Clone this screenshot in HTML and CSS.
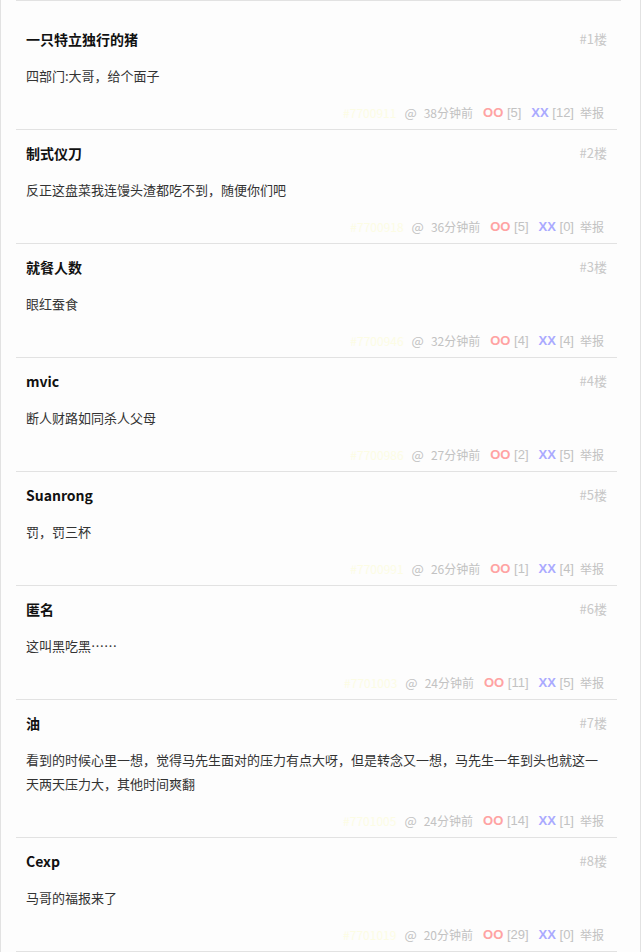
FILE: index.html
```html
<!DOCTYPE html>
<html lang="zh-CN">
  <head>
    <meta charset="UTF-8" />
    <title>吐槽</title>
    <link rel="stylesheet" href="styles.css">
  </head>
  <body>
    <div class="page">
      <div class="top-line"></div>
      <ol class="commentlist">
        <li class="comment">
          <div class="author"><b>一只特立独行的猪</b><span class="floor">#1楼</span></div>
          <div class="text">四部门:大哥，给个面子</div>
          <div class="meta">
            <span class="cid">#7700911</span>
            <span class="time"><i>@</i>38分钟前</span>
            <span class="vote"><b class="oo">OO</b> [5]</span>
            <span class="vote"><b class="xx">XX</b> [12]</span>
            <span class="report">举报</span>
          </div>
        </li>
        <li class="comment">
          <div class="author"><b>制式仪刀</b><span class="floor">#2楼</span></div>
          <div class="text">反正这盘菜我连馒头渣都吃不到，随便你们吧</div>
          <div class="meta">
            <span class="cid">#7700918</span>
            <span class="time"><i>@</i>36分钟前</span>
            <span class="vote"><b class="oo">OO</b> [5]</span>
            <span class="vote"><b class="xx">XX</b> [0]</span>
            <span class="report">举报</span>
          </div>
        </li>
        <li class="comment">
          <div class="author"><b>就餐人数</b><span class="floor">#3楼</span></div>
          <div class="text">眼红蚕食</div>
          <div class="meta">
            <span class="cid">#7700946</span>
            <span class="time"><i>@</i>32分钟前</span>
            <span class="vote"><b class="oo">OO</b> [4]</span>
            <span class="vote"><b class="xx">XX</b> [4]</span>
            <span class="report">举报</span>
          </div>
        </li>
        <li class="comment">
          <div class="author"><b>mvic</b><span class="floor">#4楼</span></div>
          <div class="text">断人财路如同杀人父母</div>
          <div class="meta">
            <span class="cid">#7700986</span>
            <span class="time"><i>@</i>27分钟前</span>
            <span class="vote"><b class="oo">OO</b> [2]</span>
            <span class="vote"><b class="xx">XX</b> [5]</span>
            <span class="report">举报</span>
          </div>
        </li>
        <li class="comment">
          <div class="author"><b>Suanrong</b><span class="floor">#5楼</span></div>
          <div class="text">罚，罚三杯</div>
          <div class="meta">
            <span class="cid">#7700991</span>
            <span class="time"><i>@</i>26分钟前</span>
            <span class="vote"><b class="oo">OO</b> [1]</span>
            <span class="vote"><b class="xx">XX</b> [4]</span>
            <span class="report">举报</span>
          </div>
        </li>
        <li class="comment">
          <div class="author"><b>匿名</b><span class="floor">#6楼</span></div>
          <div class="text">这叫黑吃黑……</div>
          <div class="meta">
            <span class="cid">#7701003</span>
            <span class="time"><i>@</i>24分钟前</span>
            <span class="vote"><b class="oo">OO</b> [11]</span>
            <span class="vote"><b class="xx">XX</b> [5]</span>
            <span class="report">举报</span>
          </div>
        </li>
        <li class="comment">
          <div class="author"><b>油</b><span class="floor">#7楼</span></div>
          <div class="text">看到的时候心里一想，觉得马先生面对的压力有点大呀，但是转念又一想，马先生一年到头也就这一天两天压力大，其他时间爽翻</div>
          <div class="meta">
            <span class="cid">#7701005</span>
            <span class="time"><i>@</i>24分钟前</span>
            <span class="vote"><b class="oo">OO</b> [14]</span>
            <span class="vote"><b class="xx">XX</b> [1]</span>
            <span class="report">举报</span>
          </div>
        </li>
        <li class="comment">
          <div class="author"><b>Cexp</b><span class="floor">#8楼</span></div>
          <div class="text">马哥的福报来了</div>
          <div class="meta">
            <span class="cid">#7701019</span>
            <span class="time"><i>@</i>20分钟前</span>
            <span class="vote"><b class="oo">OO</b> [29]</span>
            <span class="vote"><b class="xx">XX</b> [0]</span>
            <span class="report">举报</span>
          </div>
        </li>
      </ol>
    </div>
  </body>
</html>
```

FILE: styles.css
```css
html, body {
  margin: 0;
  padding: 0;
  background: #fdfdfd;
}
body {
  font-family: "Noto Sans CJK SC", "Noto Sans", sans-serif;
  color: #333;
}
.page {
  width: 639px;
  min-height: 952px;
  border-left: 1px solid #e2e2e2;
  border-right: 1px solid #e2e2e2;
  background: #fdfdfd;
}
.top-line {
  margin-left: 15px;
  width: 605px;
  border-top: 1px solid #e2e2e2;
}
.commentlist {
  list-style: none;
  margin: 15px 0 0 15px;
  padding: 0;
  width: 601px;
}
.comment {
  border-bottom: 1px solid #e2e2e2;
  padding: 13px 10px 6px;
}
.author {
  display: flex;
  justify-content: space-between;
  align-items: center;
  line-height: 20px;
}
.author b {
  font-size: 14px;
  color: #111;
}
.floor {
  font-size: 13px;
  color: #c8c8c8;
}
.text {
  margin-top: 15px;
  font-size: 13px;
  line-height: 24px;
  color: #333;
}
.meta {
  margin-top: 15px;
  padding-right: 3px;
  display: flex;
  justify-content: flex-end;
  align-items: center;
  line-height: 20px;
  font-size: 12px;
  color: #c2c2c2;
}
.meta span {
  margin-left: 8px;
}
.meta .time i {
  font-style: normal;
  font-size: 13px;
  margin-right: 7px;
}
.meta .vote {
  margin-left: 10px;
  font-family: "Liberation Sans", "Noto Sans CJK SC", sans-serif;
  font-size: 13px;
}
.meta .report {
  margin-left: 6px;
}
.cid {
  color: #fcfce4;
}
.oo {
  color: #ffa3a3;
}
.xx {
  color: #aaaaff;
}
```
